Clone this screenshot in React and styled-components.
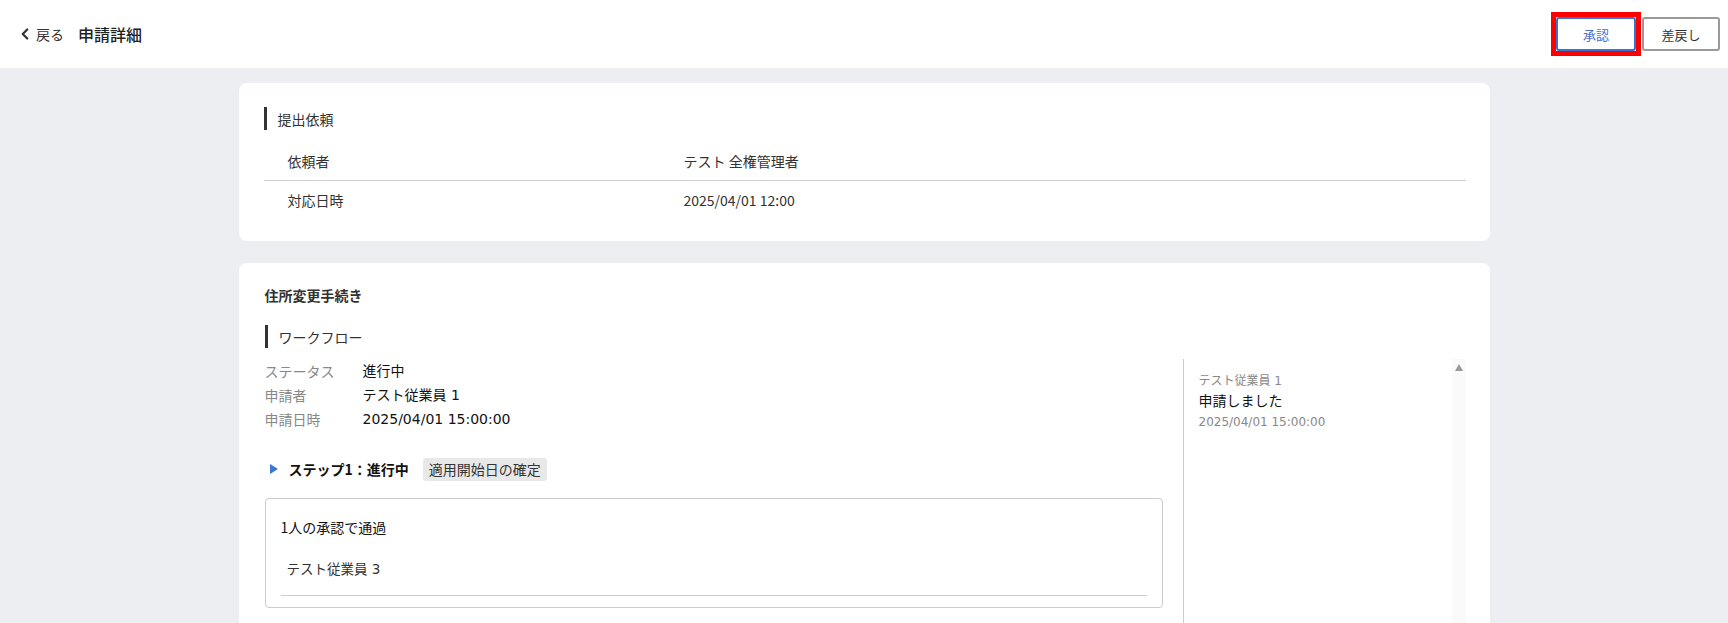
import styled, { createGlobalStyle } from 'styled-components'
import { ChevronLeft } from 'lucide-react'

const GlobalStyle = createGlobalStyle`
    body {
        margin: 0;
        background: #edeef2;
        font-family: "Noto Sans CJK JP", "Noto Sans", sans-serif;
        color: #333;
    }
`

const Header = styled.header`
    height: 68px;
    background: #fff;
    display: flex;
    align-items: center;
    justify-content: space-between;
    padding: 0 8px 0 16px;
`
const HeaderLeft = styled.div`
    display: flex;
    align-items: center;
`
const BackLink = styled.a`
    display: flex;
    align-items: center;
    gap: 2px;
    font-size: 14px;
    color: #333;
    cursor: pointer;
`
const PageTitle = styled.h1`
    margin: 0 0 0 14px;
    font-size: 16px;
    font-weight: 500;
    color: #222;
`
const Actions = styled.div`
    display: flex;
    gap: 6px;
`
const Button = styled.button`
    position: relative;
    width: ${p => p.$w || 80}px;
    height: 34px;
    border-radius: 3px;
    background: #fff;
    font-family: inherit;
    font-size: 13px;
    border: 2px solid ${p => (p.$primary ? '#3874cf' : '#999')};
    color: ${p => (p.$primary ? '#4a6fd0' : '#333')};
    cursor: pointer;
`
/* red annotation frame drawn over the button */
const Marker = styled.span`
    position: absolute;
    inset: -7px;
    border: 5px solid #ff0000;
    pointer-events: none;
`

const Main = styled.main`
    padding: 15px 0;
    display: flex;
    flex-direction: column;
    gap: 22px;
`
const Card = styled.section`
    width: 1251px;
    margin: 0 auto;
    box-sizing: border-box;
    background: #fff;
    border-radius: 8px;
    padding: ${p => p.$pad || '24px 24px 22px 25px'};
`
const SectionTitle = styled.h3`
    margin: 0;
    border-left: 3px solid #333;
    height: 23px;
    padding-left: 11px;
    display: flex;
    align-items: center;
    font-size: 14px;
    font-weight: 400;
    color: #333;
`
const Table = styled.div`
    margin-top: 12px;
`
const TableRow = styled.div`
    display: grid;
    grid-template-columns: 420px 1fr;
    height: 38px;
    align-items: center;
    font-size: 14px;
    color: #333;
    border-bottom: ${p => (p.$line ? '1px solid #d0d0d0' : 'none')};
    & > span:first-child {
        padding-left: 24px;
    }
`
const ProcTitle = styled.h2`
    margin: 0 0 20px;
    font-size: 14px;
    font-weight: 700;
    color: #333;
    line-height: 20px;
`
const FlowBody = styled.div`
    display: flex;
    gap: 20px;
    margin-top: 11px;
`
const FlowMain = styled.div`
    flex: 1;
`
const InfoRow = styled.div`
    display: grid;
    grid-template-columns: 98px 1fr;
    line-height: 24px;
    font-size: 14px;
`
const InfoLabel = styled.span`
    color: #888;
`
const InfoValue = styled.span`
    color: #111;
    font-family: "DejaVu Sans", "Noto Sans CJK JP", sans-serif;
    font-size: 14px;
`
const StepRow = styled.div`
    display: flex;
    align-items: center;
    margin-top: 26px;
    height: 24px;
    padding-left: 5px;
`
const Triangle = styled.span`
    width: 0;
    height: 0;
    border-top: 5px solid transparent;
    border-bottom: 5px solid transparent;
    border-left: 8px solid #3a76d8;
    margin-right: 11px;
`
const StepName = styled.span`
    font-size: 14px;
    font-weight: 700;
    color: #111;
`
const Tag = styled.span`
    margin-left: 14px;
    background: #e8e8e8;
    border-radius: 3px;
    padding: 0 6px;
    height: 23px;
    line-height: 23px;
    font-size: 14px;
    color: #333;
`
const StepBox = styled.div`
    margin-top: 17px;
    border: 1px solid #cbcbcb;
    border-radius: 4px;
    padding: 18px 15px 11px;
`
const StepRule = styled.div`
    font-size: 14px;
    color: #111;
    line-height: 20px;
`
const Approver = styled.div`
    margin-top: 17px;
    padding: 0 6px 11px;
    line-height: 30px;
    font-family: "DejaVu Sans", "Noto Sans CJK JP", sans-serif;
    font-size: 13.5px;
    color: #333;
    border-bottom: 1px solid #ccc;
`
const History = styled.aside`
    width: 282px;
    min-height: 320px;
    border-left: 1px solid #ccc;
    display: flex;
`
const HistoryList = styled.div`
    flex: 1;
    padding: 12px 0 0 15px;
    font-family: "DejaVu Sans", "Noto Sans CJK JP", sans-serif;
`
const HistSmall = styled.div`
    font-size: 12px;
    color: #888;
    line-height: 20px;
`
const HistMain = styled.div`
    font-size: 14px;
    color: #111;
    line-height: 21px;
`
const Scrollbar = styled.div`
    width: 14px;
    background: #fafafa;
    display: flex;
    justify-content: center;
    padding-top: 5px;
`
const ScrollArrow = styled.span`
    width: 0;
    height: 0;
    border-left: 4px solid transparent;
    border-right: 4px solid transparent;
    border-bottom: 7px solid #999;
`

const App = () => {
    return (
        <>
            <GlobalStyle />
            <Header>
                <HeaderLeft>
                    <BackLink>
                        <ChevronLeft size={18} strokeWidth={3} color="#333" />
                        戻る
                    </BackLink>
                    <PageTitle>申請詳細</PageTitle>
                </HeaderLeft>
                <Actions>
                    <Button $primary>
                        承認
                        <Marker />
                    </Button>
                    <Button $w={78}>差戻し</Button>
                </Actions>
            </Header>
            <Main>
                <Card>
                    <SectionTitle>提出依頼</SectionTitle>
                    <Table>
                        <TableRow $line>
                            <span>依頼者</span>
                            <span>テスト 全権管理者</span>
                        </TableRow>
                        <TableRow>
                            <span>対応日時</span>
                            <span>2025/04/01 12:00</span>
                        </TableRow>
                    </Table>
                </Card>
                <Card $pad="22px 24px 40px 26px">
                    <ProcTitle>住所変更手続き</ProcTitle>
                    <SectionTitle>ワークフロー</SectionTitle>
                    <FlowBody>
                        <FlowMain>
                            <InfoRow>
                                <InfoLabel>ステータス</InfoLabel>
                                <InfoValue>進行中</InfoValue>
                            </InfoRow>
                            <InfoRow>
                                <InfoLabel>申請者</InfoLabel>
                                <InfoValue>テスト従業員 1</InfoValue>
                            </InfoRow>
                            <InfoRow>
                                <InfoLabel>申請日時</InfoLabel>
                                <InfoValue>2025/04/01 15:00:00</InfoValue>
                            </InfoRow>
                            <StepRow>
                                <Triangle />
                                <StepName>ステップ1：進行中</StepName>
                                <Tag>適用開始日の確定</Tag>
                            </StepRow>
                            <StepBox>
                                <StepRule>1人の承認で通過</StepRule>
                                <Approver>テスト従業員 3</Approver>
                            </StepBox>
                        </FlowMain>
                        <History>
                            <HistoryList>
                                <HistSmall>テスト従業員 1</HistSmall>
                                <HistMain>申請しました</HistMain>
                                <HistSmall>2025/04/01 15:00:00</HistSmall>
                            </HistoryList>
                            <Scrollbar>
                                <ScrollArrow />
                            </Scrollbar>
                        </History>
                    </FlowBody>
                </Card>
            </Main>
        </>
    )
}

export default App
